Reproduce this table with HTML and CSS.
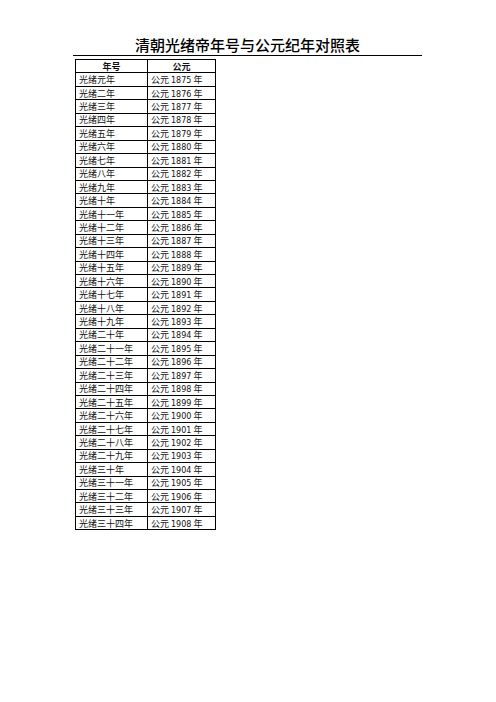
FILE: index.html
```html
<!DOCTYPE html>
<html lang="zh">
<head>
<meta charset="utf-8">
<title>清朝光绪帝年号与公元纪年对照表</title>
<link rel="stylesheet" href="styles.css">
</head>
<body>
<div class="page">
  <h1 class="title">清朝光绪帝年号与公元纪年对照表</h1>
  <table class="years">
    <colgroup><col class="c1"><col class="c2"></colgroup>
    <thead><tr><th>年号</th><th>公元</th></tr></thead>
    <tbody>
      <tr><td>光绪元年</td><td>公元 <span class="num">1875</span> 年</td></tr>
      <tr><td>光绪二年</td><td>公元 <span class="num">1876</span> 年</td></tr>
      <tr><td>光绪三年</td><td>公元 <span class="num">1877</span> 年</td></tr>
      <tr><td>光绪四年</td><td>公元 <span class="num">1878</span> 年</td></tr>
      <tr><td>光绪五年</td><td>公元 <span class="num">1879</span> 年</td></tr>
      <tr><td>光绪六年</td><td>公元 <span class="num">1880</span> 年</td></tr>
      <tr><td>光绪七年</td><td>公元 <span class="num">1881</span> 年</td></tr>
      <tr><td>光绪八年</td><td>公元 <span class="num">1882</span> 年</td></tr>
      <tr><td>光绪九年</td><td>公元 <span class="num">1883</span> 年</td></tr>
      <tr><td>光绪十年</td><td>公元 <span class="num">1884</span> 年</td></tr>
      <tr><td>光绪十一年</td><td>公元 <span class="num">1885</span> 年</td></tr>
      <tr><td>光绪十二年</td><td>公元 <span class="num">1886</span> 年</td></tr>
      <tr><td>光绪十三年</td><td>公元 <span class="num">1887</span> 年</td></tr>
      <tr><td>光绪十四年</td><td>公元 <span class="num">1888</span> 年</td></tr>
      <tr><td>光绪十五年</td><td>公元 <span class="num">1889</span> 年</td></tr>
      <tr><td>光绪十六年</td><td>公元 <span class="num">1890</span> 年</td></tr>
      <tr><td>光绪十七年</td><td>公元 <span class="num">1891</span> 年</td></tr>
      <tr><td>光绪十八年</td><td>公元 <span class="num">1892</span> 年</td></tr>
      <tr><td>光绪十九年</td><td>公元 <span class="num">1893</span> 年</td></tr>
      <tr><td>光绪二十年</td><td>公元 <span class="num">1894</span> 年</td></tr>
      <tr><td>光绪二十一年</td><td>公元 <span class="num">1895</span> 年</td></tr>
      <tr><td>光绪二十二年</td><td>公元 <span class="num">1896</span> 年</td></tr>
      <tr><td>光绪二十三年</td><td>公元 <span class="num">1897</span> 年</td></tr>
      <tr><td>光绪二十四年</td><td>公元 <span class="num">1898</span> 年</td></tr>
      <tr><td>光绪二十五年</td><td>公元 <span class="num">1899</span> 年</td></tr>
      <tr><td>光绪二十六年</td><td>公元 <span class="num">1900</span> 年</td></tr>
      <tr><td>光绪二十七年</td><td>公元 <span class="num">1901</span> 年</td></tr>
      <tr><td>光绪二十八年</td><td>公元 <span class="num">1902</span> 年</td></tr>
      <tr><td>光绪二十九年</td><td>公元 <span class="num">1903</span> 年</td></tr>
      <tr><td>光绪三十年</td><td>公元 <span class="num">1904</span> 年</td></tr>
      <tr><td>光绪三十一年</td><td>公元 <span class="num">1905</span> 年</td></tr>
      <tr><td>光绪三十二年</td><td>公元 <span class="num">1906</span> 年</td></tr>
      <tr><td>光绪三十三年</td><td>公元 <span class="num">1907</span> 年</td></tr>
      <tr><td>光绪三十四年</td><td>公元 <span class="num">1908</span> 年</td></tr>
    </tbody>
  </table>
</div>
</body>
</html>
```
FILE: styles.css
```css
html, body {
  margin: 0;
  padding: 0;
  background: #fff;
}
.page {
  width: 496px;
  min-height: 702px;
  font-family: "Noto Sans CJK SC", sans-serif;
  color: #111;
}
.title {
  margin: 0 0 0 73px;
  width: 349px;
  padding-top: 35px;
  height: 20px;
  line-height: 20px;
  font-size: 15px;
  font-weight: 500;
  font-family: "Noto Sans CJK SC", sans-serif;
  text-align: center;
  border-bottom: 1px solid #000;
  color: #000;
}
.years {
  margin: 3px 0 0 75px;
  border-collapse: collapse;
  table-layout: fixed;
  width: 140px;
  font-size: 9px;
}
.c1 { width: 72px; }
.c2 { width: 68px; }
.years th,
.years td {
  border: 1px solid #000;
  height: 12.44px;
  padding: 0 0 0 3px;
  line-height: 11px;
  white-space: nowrap;
  overflow: hidden;
  font-weight: 400;
  vertical-align: middle;
}
.years th {
  font-weight: 700;
  text-align: center;
  padding: 0;
}
.years td {
  text-align: left;
}
.num {
  font-family: "DejaVu Sans", sans-serif;
  font-size: 8px;
  line-height: 0;
}
```
